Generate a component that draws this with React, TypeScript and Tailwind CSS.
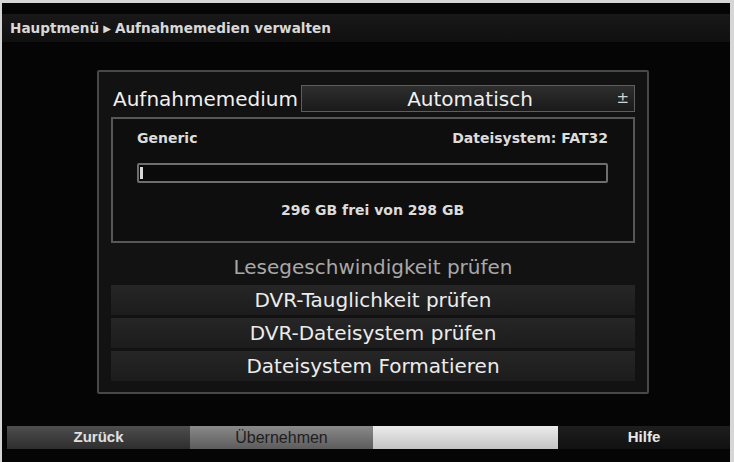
import React from 'react';

const DV = { fontFamily: '"DejaVu Sans", "Liberation Sans", sans-serif' };
const LS = { fontFamily: '"Liberation Sans", Arial, sans-serif' };

const MenuRow: React.FC<{ label: string; muted?: boolean }> = ({ label, muted }) => (
    <div
        className={`h-[30px] flex items-center justify-center text-[20px] leading-none ${
            muted ? 'text-[#a8a8a8]' : 'text-[#ececec] bg-gradient-to-b from-[#262626] to-[#1c1c1c]'
        }`}
        style={DV}
    >
        {label}
    </div>
);

const FooterButton: React.FC<{ label?: string; className: string; textClass?: string }> = ({ label, className, textClass }) => (
    <div className={`h-full flex items-center justify-center text-[15px] ${className}`} style={LS}>
        {label && <span className={textClass}>{label}</span>}
    </div>
);

const App: React.FC = () => {
    return (
        <div className="w-[734px] h-[462px] bg-[#d6d6d6] pt-[3px] pl-[2px] pr-[4px] overflow-hidden">
            <div className="h-[459px] bg-[#050505] flex flex-col">
                {/* breadcrumb */}
                <div
                    className="mt-[11px] h-[28px] flex items-center pl-[8px] bg-gradient-to-b from-[#181818] to-[#101010] text-[13.6px] font-bold text-[#d8d8d8]"
                    style={DV}
                >
                    Hauptmenü <span className="mx-[4px] text-[10px]">▶</span> Aufnahmemedien verwalten
                </div>

                {/* main panel */}
                <div className="mt-[28px] ml-[95px] w-[552px] h-[324px] border-2 border-[#484848] rounded-[2px] bg-[#121212] px-[12px] pt-[13px] flex flex-col">
                    <div className="h-[27px] flex items-center">
                        <div className="w-[190px] pl-[2px] text-[20px] text-[#f0f0f0] leading-none" style={DV}>
                            Aufnahmemedium
                        </div>
                        <div className="flex-1 h-full border border-[#5e5e5e] bg-gradient-to-b from-[#2e2e2e] to-[#1a1a1a] flex items-center relative">
                            <span className="flex-1 text-center text-[20px] text-[#f0f0f0] leading-none pl-[4px]" style={DV}>
                                Automatisch
                            </span>
                            <span className="absolute right-[5px] top-[2px] text-[15px] leading-[20px] text-[#d4d4d4]" style={DV}>
                                ±
                            </span>
                        </div>
                    </div>

                    {/* info box */}
                    <div className="mt-[5px] h-[126px] border-2 border-[#575757] bg-[#0e0e0e] pl-[24px] pr-[25px] pt-[11px] flex flex-col">
                        <div className="h-[16px] flex justify-between items-center text-[14px] font-bold text-[#dcdcdc]" style={DV}>
                            <span>Generic</span>
                            <span>Dateisystem: FAT32</span>
                        </div>
                        <div className="mt-[17px] h-[20px] border-2 border-[#6e6e6e] rounded-[2px] bg-[#0a0a0a] flex items-center px-[1px]">
                            <div className="w-[3px] h-[12px] bg-[#d8d8d8]" />
                        </div>
                        <div className="mt-[19px] h-[16px] flex justify-center items-center text-[14px] font-bold text-[#dcdcdc]" style={DV}>
                            296 GB frei von 298 GB
                        </div>
                    </div>

                    <div className="mt-[9px] flex flex-col gap-[3px]">
                        <MenuRow label="Lesegeschwindigkeit prüfen" muted />
                        <MenuRow label="DVR-Tauglichkeit prüfen" />
                        <MenuRow label="DVR-Dateisystem prüfen" />
                        <MenuRow label="Dateisystem Formatieren" />
                    </div>
                </div>

                {/* footer */}
                <div className="mt-[32px] ml-[5px] h-[23px] flex">
                    <FooterButton
                        label="Zurück"
                        className="w-[183px] bg-gradient-to-b from-[#4e4e4e] to-[#2e2e2e] font-bold"
                        textClass="text-[#e0e0e0]"
                    />
                    <FooterButton
                        label="Übernehmen"
                        className="w-[183px] bg-gradient-to-b from-[#8a8a8a] to-[#5c5c5c] text-[16px]"
                        textClass="text-[#1e1e1e]"
                    />
                    <FooterButton className="w-[185px] bg-gradient-to-b from-[#ececec] to-[#c4c4c4]" />
                    <FooterButton
                        label="Hilfe"
                        className="flex-1 bg-gradient-to-b from-[#1e1e1e] to-[#111111] font-bold"
                        textClass="text-[#e8e8e8]"
                    />
                </div>
            </div>
        </div>
    );
};

export default App;
